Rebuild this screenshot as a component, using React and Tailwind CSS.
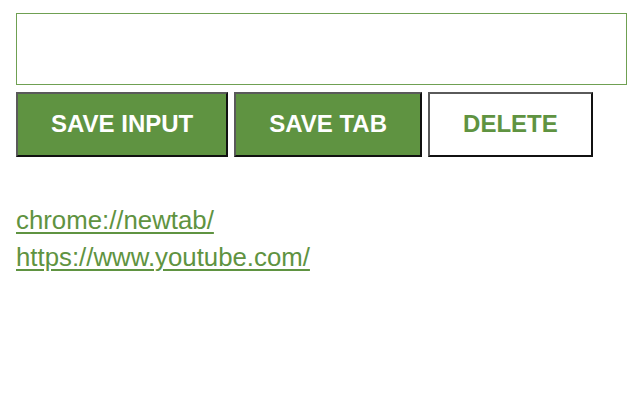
export default function App() {
  const leads = ["chrome://newtab/", "https://www.youtube.com/"];

  return (
    <div className="min-h-[400px] bg-white pl-4 pt-[13px] font-['Liberation_Sans',Arial,sans-serif]">
      {/* Input */}
      <input
        type="text"
        className="block w-[611px] h-[72px] border-[1.5px] border-[#6fa052] bg-white outline-none"
      />

      {/* Buttons */}
      <div className="flex gap-[6px] mt-[7px]">
        <button className="bg-[#5f9341] text-white font-bold text-[24px] leading-[27px] px-[33px] pt-[16px] pb-[18px] border-2 border-t-[#5a5a5a] border-l-[#5a5a5a] border-b-[#111] border-r-[#111]">
          SAVE INPUT
        </button>
        <button className="bg-[#5f9341] text-white font-bold text-[24px] leading-[27px] px-[33px] pt-[16px] pb-[18px] border-2 border-t-[#5a5a5a] border-l-[#5a5a5a] border-b-[#111] border-r-[#111]">
          SAVE TAB
        </button>
        <button className="bg-white text-[#5f9341] font-bold text-[24px] leading-[27px] px-[33px] pt-[16px] pb-[18px] border-2 border-t-[#5a5a5a] border-l-[#5a5a5a] border-b-[#111] border-r-[#111]">
          DELETE
        </button>
      </div>

      {/* Links */}
      <ul className="mt-[45px]">
        {leads.map((lead, i) => (
          <li key={i} className="text-[25.8px] leading-[37px]">
            <a
              href={lead}
              className="text-[#5f9341] underline decoration-[#5f9341] decoration-2 underline-offset-[3px]"
            >
              {lead}
            </a>
          </li>
        ))}
      </ul>
    </div>
  );
}
